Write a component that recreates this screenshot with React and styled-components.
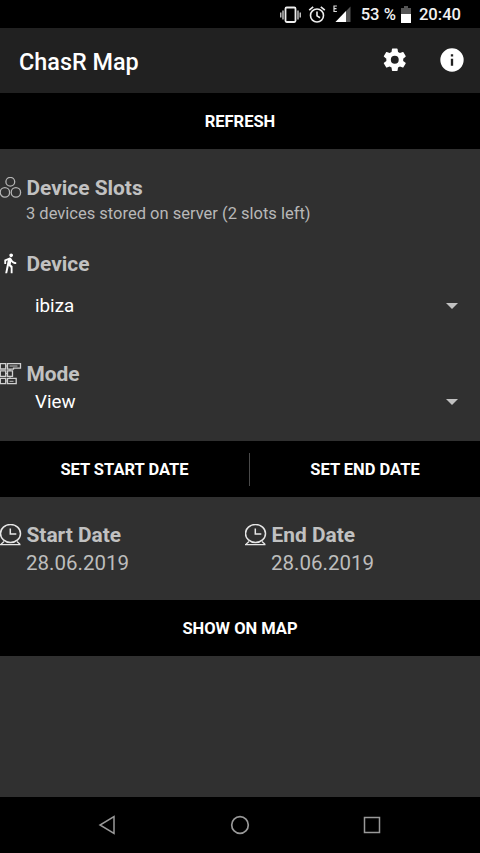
import React from 'react'
import styled, { createGlobalStyle } from 'styled-components'

const GlobalStyle = createGlobalStyle`
  * {
    box-sizing: border-box;
  }
  body {
    margin: 0;
    background: #303030;
    font-family: Roboto, 'Liberation Sans', sans-serif;
  }
  svg {
    display: block;
    flex: none;
  }
`

// styled
const Screen = styled.div`
  display: flex;
  flex-direction: column;
  width: 480px;
  height: 853px;
  overflow: hidden;
  background: #303030;
  color: #fff;
`
const StatusBar = styled.div`
  display: flex;
  align-items: center;
  justify-content: flex-end;
  height: 28px;
  padding: 1px 19px 0 0;
  background: #000;
  color: #f2f2f2;
  font-size: 16.6px;
  font-weight: 500;
  line-height: 28px;
  white-space: nowrap;
`
const StatusItem = styled.span`
  margin-left: ${({ $gap }) => $gap}px;
`
const AppBar = styled.header`
  display: flex;
  align-items: center;
  height: 65px;
  padding: 0 14px 0 19px;
  background: #212121;
  h1 {
    flex: 1;
    margin: 0;
    padding-top: 2px;
    font-size: 23.4px;
    font-weight: 500;
    line-height: 28px;
  }
`
const AppBarActions = styled.div`
  display: flex;
  gap: 29px;
  padding-bottom: 1px;
`
const BarButton = styled.button`
  flex: 1;
  height: 56px;
  padding: 0;
  border: 0;
  background: #000;
  color: #fff;
  font-family: inherit;
  font-size: 16.5px;
  font-weight: 700;
`
const ButtonBar = styled.div`
  display: flex;
  align-items: center;
  flex: none;
  height: 56px;
  margin-top: ${({ $top }) => $top || 0}px;
  background: #000;
`
const StartButton = styled(BarButton)`
  flex: 0 0 249px;
`
const Separator = styled.i`
  width: 1px;
  height: 33px;
  background: #4a4a4a;
`
const Section = styled.section`
  width: ${({ $width }) => $width || '100%'};
  margin-top: ${({ $top }) => $top || 0}px;
`
const Heading = styled.h2`
  display: flex;
  align-items: center;
  gap: 4.5px;
  height: 26px;
  margin: 0;
  color: #c1c1c1;
  font-size: 20.9px;
  font-weight: 700;
  line-height: 26px;
`
const Summary = styled.p`
  height: 24px;
  margin: 0;
  padding: 1px 0 0 26px;
  color: #b8b8b8;
  font-size: 16.5px;
  line-height: 24px;
`
const DateValue = styled.p`
  margin: 0;
  padding-left: 26px;
  color: #bdbdbd;
  font-size: 20.5px;
  line-height: 30px;
`
const Select = styled.div`
  display: flex;
  align-items: center;
  justify-content: space-between;
  height: 28px;
  margin-top: ${({ $top }) => $top}px;
  padding: 0 22px 0 35px;
  font-size: 18.8px;
  line-height: 28px;
`
const Dates = styled.div`
  display: flex;
  height: 103px;
  padding-top: 25px;
`
const NavBar = styled.nav`
  display: flex;
  align-items: center;
  justify-content: space-between;
  height: 56px;
  margin-top: auto;
  padding: 0 98px 0 97px;
  background: #000;
`

// icons
const IconVibrate = () => (
  <svg width="21" height="18" viewBox="0 0 21 18" fill="none" stroke="#eee">
    <rect x="5.5" y="1.5" width="10" height="14.5" rx="1.2" strokeWidth="1.8" />
    <path d="M3 4.5v9M18 4.5v9M.8 6.5v5M20.2 6.5v5" strokeWidth="1.2" />
  </svg>
)
const IconAlarm = () => (
  <svg width="18" height="18" viewBox="0 .5 18 18" fill="none" stroke="#eee" strokeWidth="1.6">
    <circle cx="9" cy="10" r="6.5" />
    <path d="M1.2 4.7l4-3.4M16.8 4.7l-4-3.4M9 6v4.4l3 1.8" />
  </svg>
)
const IconSignal = () => (
  <svg width="19" height="19" viewBox="0 1.5 19 19">
    <path d="M18.5 3v15.500H3.5z" fill="#555" />
    <path d="M14 7.500v11H3.5z" fill="#fff" />
    <path d="M4.9 2.500H2v5.500h2.900M2 5.200h2.500" fill="none" stroke="#ddd" strokeWidth="1.2" />
  </svg>
)
const IconBattery = () => (
  <svg width="10" height="17" viewBox="0 0 10 17">
    <path d="M3 0h4v2h3v7H0V2h3z" fill="#555" />
    <path d="M0 8h10v9H0z" fill="#fff" />
  </svg>
)
const IconGear = () => (
  <svg width="28" height="28" viewBox="-.2 -.2 24.8 24.8" fill="#fff">
    <path d="M19.43 12.98c.04-.32.07-.64.07-.98s-.03-.66-.07-.98l2.11-1.65c.19-.15.24-.42.12-.64l-2-3.46c-.12-.22-.39-.3-.61-.22l-2.49 1c-.52-.4-1.08-.73-1.69-.98l-.38-2.65A.49.49 0 0 0 14 2h-4c-.25 0-.46.18-.49.42l-.38 2.65c-.61.25-1.17.59-1.69.98l-2.49-1c-.23-.09-.49 0-.61.22l-2 3.46c-.13.22-.07.49.12.64l2.11 1.65c-.04.32-.07.65-.07.98s.03.66.07.98l-2.11 1.65c-.19.15-.24.42-.12.64l2 3.46c.12.22.39.3.61.22l2.49-1c.52.4 1.08.73 1.69.98l.38 2.65c.03.24.24.42.49.42h4c.25 0 .46-.18.49-.42l.38-2.65c.61-.25 1.17-.59 1.69-.98l2.49 1c.23.09.49 0 .61-.22l2-3.46c.12-.22.07-.49-.12-.64zM12 15.5a3.5 3.5 0 1 1 0-7 3.5 3.5 0 0 1 0 7z" />
  </svg>
)
const IconInfo = () => (
  <svg width="28" height="28" viewBox="0 0 24 24" fill="#fff">
    <path d="M12 2a10 10 0 1 0 0 20 10 10 0 0 0 0-20zm1 15h-2v-6h2zm0-8h-2V7h2z" />
  </svg>
)
const IconSlots = () => (
  <svg width="22" height="22" viewBox="0 0 22 22" fill="none" stroke="#b4b4b4" strokeWidth="1.3">
    <circle cx="10.3" cy="4.8" r="4.4" />
    <circle cx="4.9" cy="15.4" r="4.7" />
    <circle cx="15.9" cy="15.4" r="4.7" />
  </svg>
)
const IconWalk = () => (
  <svg width="22" height="22" viewBox="1.3 1 24 24" fill="#fff">
    <path d="M13.5 5.5c1.1 0 2-.9 2-2s-.9-2-2-2-2 .9-2 2 .9 2 2 2zM9.8 8.9L7 23h2.1l1.8-8 2.1 2v6h2v-7.5l-2.1-2 .6-3C14.8 12 16.8 13 19 13v-2c-1.9 0-3.5-1-4.3-2.4l-1-1.6c-.4-.6-1-1-1.7-1-.3 0-.5.1-.8.1L6 8.3V13h2V9.6l1.8-.7" />
  </svg>
)
const IconMode = () => (
  <svg width="22" height="22" viewBox="0 0 22 22" fill="none" stroke="#d0d0d0" strokeWidth="1.3">
    <path d="M.3.6h5.4v5.4H.3zM7.500.6h13v4.600H13.500v1h-6zM.3 7.800h5.400v5.600H.3zM7.500 7.800h5v5.600h-5zM.3 15.300h5.400v5.400H.3zM7.500 15.300h8.700v5.400H7.500z" />
    <path d="M9.500 3h8M9.500 18.300h4M10 6v2M10 13.500v2M5.700 10.500h2M5.700 3h2M5.700 18h2" strokeWidth=".9" />
  </svg>
)
const IconClock = () => (
  <svg width="22" height="22" viewBox="0 0 22 22" fill="none" stroke="#e6e6e6" strokeWidth="1.5">
    <ellipse cx="10.5" cy="9.5" rx="10" ry="9" />
    <path d="M10.3 4.5V10h6" />
    <path d="M0 20.7h20.500M4 17.500L1 20.200M17 17.500l3 2.700" strokeWidth="1.3" />
  </svg>
)
const IconCaret = () => (
  <svg width="12" height="6" viewBox="0 0 12 6" fill="#c1c1c1">
    <path d="M0 0h12L6 6z" />
  </svg>
)

// markup
const App = () => (
  <Screen>
    <GlobalStyle />
    <StatusBar>
      <IconVibrate />
      <StatusItem $gap={7}><IconAlarm /></StatusItem>
      <StatusItem $gap={6}><IconSignal /></StatusItem>
      <StatusItem $gap={10}>53 %</StatusItem>
      <StatusItem $gap={5}><IconBattery /></StatusItem>
      <StatusItem $gap={8}>20:40</StatusItem>
    </StatusBar>
    <AppBar>
      <h1>ChasR Map</h1>
      <AppBarActions>
        <IconGear />
        <IconInfo />
      </AppBarActions>
    </AppBar>
    <ButtonBar>
      <BarButton>REFRESH</BarButton>
    </ButtonBar>
    <Section $top={26}>
      <Heading><IconSlots />Device Slots</Heading>
      <Summary>3 devices stored on server (2 slots left)</Summary>
    </Section>
    <Section $top={26}>
      <Heading><IconWalk />Device</Heading>
      <Select $top={15}>ibiza<IconCaret /></Select>
    </Section>
    <Section $top={41}>
      <Heading><IconMode />Mode</Heading>
      <Select $top={1}>View<IconCaret /></Select>
    </Section>
    <ButtonBar $top={25}>
      <StartButton>SET START DATE</StartButton>
      <Separator />
      <BarButton>SET END DATE</BarButton>
    </ButtonBar>
    <Dates>
      <Section $width="245px">
        <Heading><IconClock />Start Date</Heading>
        <DateValue>28.06.2019</DateValue>
      </Section>
      <Section $width="235px">
        <Heading><IconClock />End Date</Heading>
        <DateValue>28.06.2019</DateValue>
      </Section>
    </Dates>
    <ButtonBar>
      <BarButton>SHOW ON MAP</BarButton>
    </ButtonBar>
    <NavBar>
      <svg width="20" height="20" viewBox="0 0 20 20" fill="none" stroke="#999" strokeWidth="1.5">
        <path d="M17 1.5v17L3 10z" />
      </svg>
      <svg width="20" height="20" viewBox="0 0 20 20" fill="none" stroke="#999" strokeWidth="1.7">
        <circle cx="10" cy="10" r="8.3" />
      </svg>
      <svg width="20" height="20" viewBox="0 0 20 20" fill="none" stroke="#999" strokeWidth="1.5">
        <path d="M2.5 2.5h15v15h-15z" />
      </svg>
    </NavBar>
  </Screen>
)

export default App
